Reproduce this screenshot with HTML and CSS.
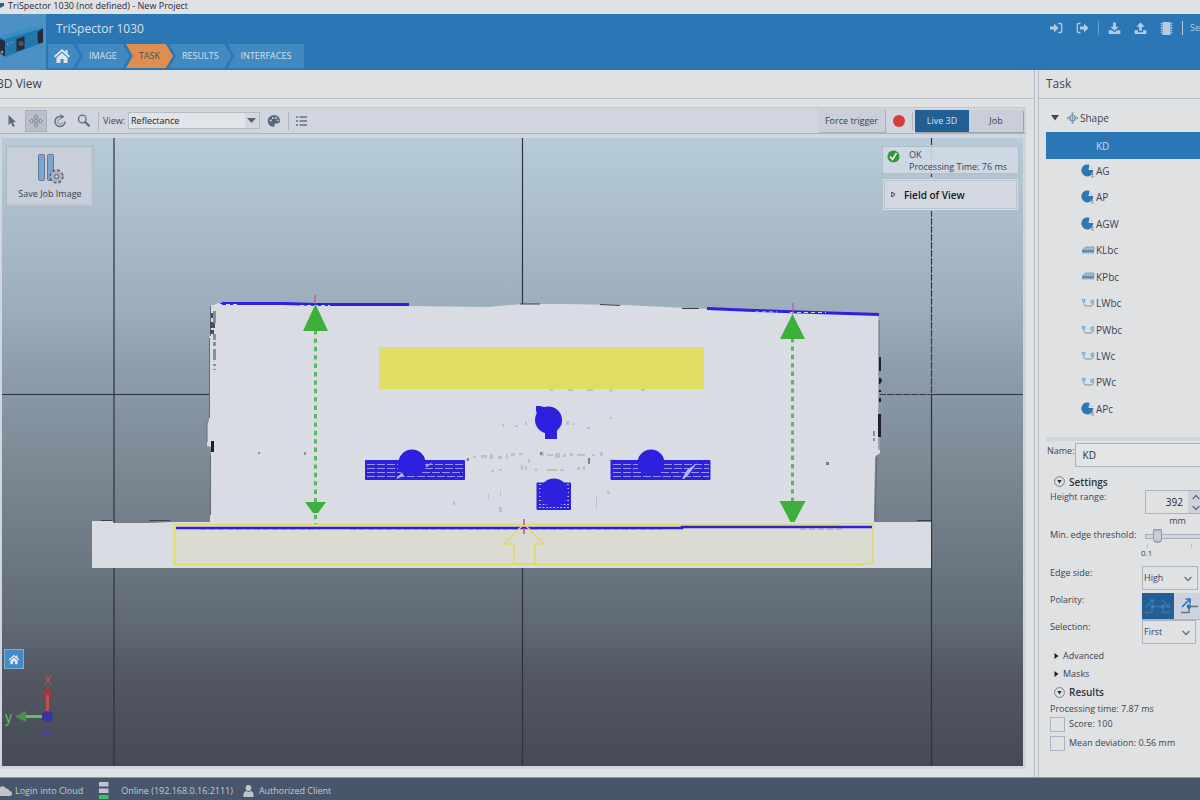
FILE: index.html
```html
<!DOCTYPE html>
<html lang="en">
<head>
<meta charset="utf-8">
<title>TriSpector 1030 (not defined) - New Project</title>
<link rel="stylesheet" href="styles.css">
</head>
<body>
<svg class="defs" width="0" height="0" aria-hidden="true">
  <defs>
    <symbol id="house" viewBox="0 0 18 16"><path d="M9 1 1 8l1.300 1.400L9 3.600l6.700 5.800L17 8l-2.500-2.200V2h-2v2z"/><path d="M9 5 3.500 9.700V15h4v-4h3v4h4V9.700z"/></symbol>
    <symbol id="pie" viewBox="0 0 14 14"><path d="M8.500.8A6 6 0 1 0 11.500 9.500L12.300 6H7.500z" fill="#2c78b6"/><path d="M9.300 2.500 9 5h3.200A5 5 0 0 0 11 3z" fill="#c3d3df"/><path d="M9.500 10.300h2.800L10.300 13H13" fill="none" stroke="#7c8895" stroke-width=".8"/></symbol>
    <symbol id="slab" viewBox="0 0 13 9"><path d="M1 4 4 1h8.500v3z" fill="#a9c0d3" stroke="#7597b2" stroke-width=".8"/><path d="M.5 4h12v3.500H.5z" fill="#8db1cf"/><path d="M.5 5.200h12" stroke="#2c78b6" stroke-width="1.200"/></symbol>
    <symbol id="edges" viewBox="0 0 14 10"><path d="M2.500 5.500Q3 8 5.500 8h5.200q1.500-.5 1.500-3.500" fill="none" stroke="#75879a" stroke-width=".9"/><path d="M.5 1.500Q2.500 0 4.500 1.500 5 4 2.800 5.500.8 4 .5 1.500zM9 3q1.500-2 3.800-1.500Q14 4 12 6 9.500 6 9 3z" fill="#79b0d5"/><path d="M2.500 2.500v1M11.200 3.200v1" stroke="#dbe8f0"/></symbol>
    <symbol id="chev" viewBox="0 0 8 6"><path d="m.7 1 3.300 3.700L7.300 1" fill="none" stroke="#5d6776" stroke-width="1.200"/></symbol>
  </defs>
</svg>

<div class="titlebar">
  <svg width="4" height="10" viewBox="0 0 4 10"><path d="M0 2h4v3L0 7z" fill="#22639a"/></svg>
  <span>TriSpector 1030 (not defined) - New Project</span>
</div>

<header class="header">
  <div class="product">
    <svg width="46" height="56" viewBox="0 14 46 56">
      <path d="M0 37.500 31 27.500 43 28 42 43 5 57 0 53z" fill="#2277ad"/>
      <path d="M0 36.500 31 26.800 43 28 4 39.500z" fill="#3790c5"/>
      <path d="M0 39 5 41v15.500L0 53z" fill="#252c3d"/>
      <path d="m16.500 39 8-2.800v12.500l-8 2.800z" fill="#292a3a"/><circle cx="21" cy="43.500" r="2.600" fill="#535166"/>
      <path d="m37.500 32 5.500-3.500v14l-5 1z" fill="#242839"/>
      <circle cx="7.500" cy="44" r=".6" fill="#9dc9e4"/><circle cx="10" cy="43" r=".6" fill="#9dc9e4"/><circle cx="12.500" cy="42.200" r=".6" fill="#9dc9e4"/>
      <circle cx="2" cy="52" r="1.500" fill="#8d858a"/>
    </svg>
  </div>
  <div class="brand">
    <h1>TriSpector 1030</h1>
    <nav class="steps">
      <a href="#home" class="step step-home" aria-label="Home"><svg width="18" height="16"><use href="#house"/></svg></a>
      <a href="#image" class="step">IMAGE</a>
      <a href="#task" class="step active">TASK</a>
      <a href="#results" class="step">RESULTS</a>
      <a href="#interfaces" class="step last">INTERFACES</a>
    </nav>
  </div>
  <div class="header-tools">
    <button aria-label="Log in"><svg width="13" height="12" viewBox="0 0 13 12"><path d="M0 4.500h4V1.500L8.500 6 4 10.500v-3H0z"/><path d="M8.500 1.500h2q1.200 0 1.200 1.200v6.600q0 1.200-1.200 1.200h-2" fill="none" stroke="#b5cce0" stroke-width="1.300"/></svg></button>
    <button aria-label="Log out"><svg width="13" height="12" viewBox="0 0 13 12"><path d="M4 4.500h4V1.500L12.500 6 8 10.500v-3H4z"/><path d="M4.500 1.500h-2Q1.300 1.500 1.300 2.700v6.600q0 1.200 1.200 1.200h2" fill="none" stroke="#b5cce0" stroke-width="1.300"/></svg></button>
    <i class="tool-line"></i>
    <button aria-label="Download"><svg width="13" height="13" viewBox="0 0 14 13"><path d="M5.500 0h3v4.500h3L7 9 2.500 4.500h3z"/><path d="M.7 8.500h3.500L7 10.500l2.800-2h3.500v3.800H.7z"/></svg></button>
    <button aria-label="Upload"><svg width="13" height="13" viewBox="0 0 14 13"><path d="M7 0 2.500 4.500h3V9h3V4.500h3z"/><path d="M.7 8.500h3.500v2h5.600v-2h3.500v3.800H.7z"/></svg></button>
    <button aria-label="Memory"><svg width="13" height="13" viewBox="0 0 13 13"><path d="M2.500 0h8v13h-8z"/><path d="M1.500 1v11M11.500 1v11" stroke="#b5cce0" stroke-width="1.500" stroke-dasharray="1.300 1"/></svg></button>
    <i class="tool-line light"></i>
    <span class="service">Service</span>
  </div>
</header>

<main class="main">
  <section class="view-panel">
    <h2 class="panel-title view-title">3D View</h2>
    <div class="workspace">
      <div class="toolbar">
        <button class="tool" aria-label="Select"><svg width="10" height="14" viewBox="0 0 10 14"><path d="M1.500 1v10l2.500-2 2 4 1.800-1-1.900-3.700 3-.3z" fill="#5a6c82"/></svg></button>
        <button class="tool pressed" aria-label="Move"><svg width="14" height="14" viewBox="0 0 14 14"><path d="M7 .7 9 3.200H7.700v3.100h3.100V5l2.500 2-2.500 2V7.700H7.700v3.100H9L7 13.300l-2-2.500h1.300V7.700H3.200V9L.7 7l2.500-2v1.300h3.100V3.200H5z" fill="#d6dbe2" stroke="#69788a" stroke-width=".8"/></svg></button>
        <button class="tool" aria-label="Rotate"><svg width="14" height="14" viewBox="0 0 14 14"><path d="M8 2.600A5 5 0 1 0 12 7.500" fill="none" stroke="#66768a" stroke-width="1.500"/><path d="M7.500 0 11.500 2.700 7.500 5.300z" fill="#66768a"/><path d="M7.500 5.300A2.400 2.400 0 1 0 9.500 7.800" fill="none" stroke="#7b8999"/></svg></button>
        <button class="tool" aria-label="Zoom"><svg width="14" height="14" viewBox="0 0 14 14"><circle cx="5.300" cy="5" r="3.800" fill="none" stroke="#5a6c82" stroke-width="1.300"/><path d="m8 7.700 4.500 4.500" stroke="#5a6c82" stroke-width="2.200"/></svg></button>
        <i class="bar-line"></i>
        <label for="view">View:</label>
        <span class="combo"><select id="view"><option>Reflectance</option></select><svg class="combo-arrow" width="9" height="5" viewBox="0 0 9 5"><path d="M0 0h9L4.500 5z" fill="#536377"/></svg></span>
        <button class="tool" aria-label="Palette"><svg width="14" height="12" viewBox="0 0 14 12"><path fill-rule="evenodd" d="M7 .3C3 .3.800 3 .800 6S3 11.700 6.500 11.700c2 0 .5-2 1.200-2.800 1-1.300 5.300.9 5.300-3.200C13 2.500 10.500.3 7 .3zM3.800 4.500a1 1 0 1 1 0 2 1 1 0 0 1 0-2zM5.800 2a1 1 0 1 1 0 2 1 1 0 0 1 0-2zM9 2a1 1 0 1 1 0 2 1 1 0 0 1 0-2zm2 2.500a.9.900 0 1 1 0 1.800.9.900 0 0 1 0-1.800z" fill="#56667b"/></svg></button>
        <i class="bar-line tight"></i>
        <button class="tool" aria-label="List"><svg width="12" height="10" viewBox="0 0 12 10"><path d="M0 1h2M0 5h2M0 9h2M3.500 1H11M3.500 5H11M3.500 9H11" stroke="#5f6f84" stroke-width="1.300"/></svg></button>
        <span class="spacer"></span>
        <button class="trigger">Force trigger</button>
        <button class="record" aria-label="Record"></button>
        <i class="bar-line tight"></i>
        <div class="mode"><button class="on">Live 3D</button><button>Job</button></div>
      </div>

      <div class="viewport">
        <svg class="scene" viewBox="2 138 1021 628" preserveAspectRatio="none" role="img" aria-label="3D reflectance scan">
          <g stroke="#2d333e" stroke-width="1.200"><path d="M114 138v628M522.500 138v628M931.500 395v371M2 394.500h877M931 394.500h92"/></g>
          <path d="M931.500 138v257M879 394.500h52" stroke="#39383f" stroke-width="1.200" stroke-dasharray="7 1"/>
          <path d="M211 305h3l4-2 190 3 80 1 35-3h40l60 1 88 4 70 3 97 3 1 8 1 130-5 4-1 65h57v46H92v-47h20l2 2h36l22-1h38l1-75-4-1v-22l2-3v-80l1-8z" fill="#dadce4"/>
          <path d="M210.500 306v30M209.500 338v80M207 422v20M210.500 455v60M877 455l-2 65M879 320v130" stroke="#646a75" stroke-width="1"/>
          <path d="M101 520.500h11M149 520.500h21M917 520.500h14M600 304.500l20 1M682 308.500h17M520 304h20M220 303.500h12" stroke="#3e424d" stroke-width="1.200"/>
          <g fill="#22202d"><path d="M211 441h3v11h-3zM879 357h2v14h-2zM879 378h2l1 3-2 3h-1zM879 390h2v2h-2zM879 398h2v4h-2zM878 414h3v23h-3z"/></g>
          <g fill="#4d4e5a"><path d="M211 313h4v5h-4zM210 322h5v6h-5zM210 330h4v4h-4z"/></g>
          <g fill="#8c8e9a"><path d="M213 311h3v12h-3zM213 334h3v6h-3zM213 342h3v4h-3zM213 349h3v11h-3zM213 364h3v2h-3zM213 369h3v1h-3zM873 431h2v5h-2zM873 438h2v3h-2zM258 452h2v2h-2zM304 452h2v3h-2z"/></g>
          <path d="M826 462h3v3h-3z" fill="#757884"/>
          <path d="M379 347h325v42H379z" fill="#e0de62"/>
          <g fill="#bdc0ca"><path d="M502 424h2v3h-2zM515 425h3v2h-3zM525 422h2v3h-2zM560 423h2v3h-2zM566 421h3v4h-3zM573 423h2v2h-2zM610 417h2v2h-2zM587 427h3v2h-3zM550 389h3v2h-3zM568 389h5v2h-5zM587 389h6v2h-6zM610 389h2v3h-2zM641 389h4v2h-4zM466 459h3v2h-3zM473 456h3v2h-3zM481 455h6v3h-6zM490 454h3v5h-3zM498 456h4v3h-4zM506 454h2v5h-2zM511 453h4v3h-4zM519 453h4v2h-4zM528 459h2v4h-2zM541 452h3v4h-3zM547 454h6v2h-6zM555 453h5v5h-5zM563 454h3v3h-3zM570 453h3v3h-3zM577 454h8v2h-8zM592 454h3v2h-3zM600 452h3v4h-3zM609 459h6v2h-6zM491 470h3v2h-3zM499 469h3v2h-3zM521 465h2v5h-2zM525 466h2v4h-2zM535 468h2v3h-2zM547 469h10v2h-10zM560 469h4v2h-4zM577 467h3v3h-3zM583 466h2v4h-2zM453 501h2v4h-2zM488 494h1v5h-1zM500 490h1v7h-1zM499 507h3v5h-3zM596 496h1v12h-1zM607 491h3v3h-3z"/></g>
          <path d="M540 452h2v3h-2zM588 458h2v6h-2zM467 458h2v3h-2z" fill="#7f828e"/>
          <g fill="#2d20df">
            <path d="M536 406h4l8 2v8h-10l-2-5z"/><circle cx="548.500" cy="420" r="13.500"/><path d="M545 430h12v9h-12z"/>
            <rect x="365" y="460" width="100" height="20" rx="1"/><circle cx="412" cy="463" r="13.500"/>
            <rect x="610.500" y="460" width="100" height="20" rx="1"/><circle cx="651" cy="463" r="13.500"/>
            <rect x="536.500" y="482.500" width="34.500" height="27.500" rx="1"/>
          </g>
          <g stroke="#9896f0" stroke-width="1" stroke-dasharray="8 2" fill="none">
            <path d="M367 464.500h31M425 464.500h38M367 468.500h31M425 468.500h38M367 472.500h34M422 472.500h41M367 476.500h96M613 464.500h25M664 464.500h45M613 468.500h25M664 468.500h45M613 472.500h28M661 472.500h48M613 476.500h96"/></g>
          <path d="M386 478.500h10l6-6 2 3-6 3zM682 479l5-9 10-7-8 11-5 5zM425 466l8-4-6 5z" fill="#b6b7ee"/>
          <circle cx="412" cy="463" r="13" fill="#2d20df"/>
          <g stroke="#b4b4f4" stroke-width="1.200" stroke-dasharray="2 1.500"><path d="M539 484.500h30M539 488.500h30M539 492.500h30M539 496.500h30M539 500.500h30M539 504.500h30M539 507.500h30"/></g>
          <circle cx="554" cy="492.500" r="14" fill="#2d20df"/>
          <path d="M222 303.500h62l32 1h93M707 308.500l48 2 60 2 64 2" fill="none" stroke="#2d20df" stroke-width="3"/>
          <path d="M226 304.500h14M300 305.500h30M755 312h22M790 312.500h36" stroke="#d4d4ea" stroke-dasharray="4 3"/>
          <path d="M175 525.500h698v38H175z" fill="#dbdbd4"/>
          <path d="M174.500 524.500h665v-1H873v40h-9v1H174.500z" fill="none" stroke="#dfda61" stroke-width="1.500"/>
          <path d="M176 528h506v-1h190" fill="none" stroke="#2d20df" stroke-width="2.500"/>
          <path d="M200 529.500h120M350 529.500h170M532 529.500h130M800 529h45" stroke="#8c88dd" stroke-dasharray="6 3"/>
          <path d="m524 524-20 20h10v20h21v-20h9z" fill="none" stroke="#dfda61" stroke-width="1.500"/>
          <path d="M524 519v18" stroke="#d743a4" stroke-width="1.500" stroke-dasharray="6 3"/>
          <path d="M315 295v9M793 303v11" stroke="#cc4a9c" stroke-width="1.200"/>
          <g stroke="#57ba62" stroke-width="3" stroke-dasharray="4.400 4"><path d="M315.500 330v194M792.500 338v166"/></g>
          <path d="m315.500 304 12.500 27h-25zM305 502h21l-8 11h-5zM792.500 314l12.500 25h-25zM779.500 501h26l-11 21h-4z" fill="#3caf3c"/>
          <path d="M47.500 693v20" stroke="#ca4b47" stroke-width="3"/><path d="m47.500 685 5.500 10H42z" fill="#983d3e"/>
          <path d="M42 716.500H25" stroke="#5fc060" stroke-width="3"/><path d="m15 716.500 11-5.500v11z" fill="#47934b"/>
          <circle cx="47.500" cy="716.500" r="5.500" fill="#3735a1"/>
          <g class="axis"><text x="44" y="684" fill="#c44f50">x</text><text x="5" y="722" fill="#61c263">y</text><text x="43" y="735" fill="#4544bd">Z</text></g>
        </svg>
        <button class="save-job">
          <svg width="30" height="32" viewBox="0 0 30 32"><g fill="#7ea4cd" stroke="#617995"><rect x="3.500" y="1.500" width="6" height="26" rx="1"/><rect x="12.500" y="1.500" width="6" height="26" rx="1"/></g><circle cx="21.500" cy="23.500" r="6" fill="#a9aebb" stroke="#5a5e6d" stroke-width="2.400" stroke-dasharray="2.700 2"/><circle cx="21.500" cy="23.500" r="5.800" fill="#a9aebb"/><circle cx="21.500" cy="23.500" r="2" fill="#c7ccd8" stroke="#5a5e6d"/></svg>
          <span>Save Job Image</span>
        </button>
        <button class="home-view" aria-label="Reset view"><svg width="12" height="11"><use href="#house"/></svg></button>
        <div class="overlays">
          <div class="status-card">
            <svg width="13" height="13" viewBox="0 0 13 13"><circle cx="6.500" cy="6.500" r="6" fill="#2e9637"/><path d="m3 6.500 2.500 3L9.500 3" fill="none" stroke="#e3efe5" stroke-width="1.700"/></svg>
            <div>OK<br>Processing Time: 76 ms</div>
          </div>
          <button class="fov"><svg width="5" height="7" viewBox="0 0 5 7"><path d="m.7 1 3.500 2.500L.7 6z" fill="none" stroke="#424855"/></svg>Field of View</button>
        </div>
      </div>
    </div>
  </section>

  <aside class="task-panel">
    <h2 class="panel-title">Task</h2>
    <ul class="tree">
      <li class="root"><svg width="8" height="6" viewBox="0 0 8 6"><path d="M0 0h8L4 5.500z" fill="#3e4a5c"/></svg><svg width="11" height="12" viewBox="0 0 12 12"><circle cx="6" cy="6" r="3" fill="none" stroke="#5e93bb" stroke-width="1.300"/><path d="M6 0v12M0 6h12M4.500 1.500 6 0l1.500 1.500M4.500 10.500 6 12l1.500-1.500M1.500 4.500 0 6l1.500 1.500M10.500 4.500 12 6l-1.500 1.500" fill="none" stroke="#6e8da6" stroke-width=".8"/></svg><span>Shape</span></li>
      <li class="selected"><i></i><span>KD</span></li>
      <li><svg width="14" height="14"><use href="#pie"/></svg><span>AG</span></li>
      <li><svg width="14" height="14"><use href="#pie"/></svg><span>AP</span></li>
      <li><svg width="14" height="14"><use href="#pie"/></svg><span>AGW</span></li>
      <li><svg width="14" height="9"><use href="#slab"/></svg><span>KLbc</span></li>
      <li><svg width="14" height="9"><use href="#slab"/></svg><span>KPbc</span></li>
      <li><svg width="14" height="10"><use href="#edges"/></svg><span>LWbc</span></li>
      <li><svg width="14" height="10"><use href="#edges"/></svg><span>PWbc</span></li>
      <li><svg width="14" height="10"><use href="#edges"/></svg><span>LWc</span></li>
      <li><svg width="14" height="10"><use href="#edges"/></svg><span>PWc</span></li>
      <li><svg width="14" height="14"><use href="#pie"/></svg><span>APc</span></li>
    </ul>
    <div class="name-row"><label for="name">Name:</label><input id="name" type="text" value="KD"></div>
    <div class="props">
      <h3><svg width="11" height="11" viewBox="0 0 11 11"><circle cx="5.500" cy="5.500" r="4.900" fill="none" stroke="#6a7384" stroke-width=".9"/><path d="M3.300 4h4.400L5.500 7.500z" fill="#272d39"/></svg>Settings</h3>
      <div class="row row-height"><label for="range">Height range:</label>
        <div class="range-box"><div class="spin"><input id="range" type="text" value="392"><div class="spin-buttons"><button aria-label="Increase"><svg class="flip" width="8" height="6"><use href="#chev"/></svg></button><button aria-label="Decrease"><svg width="8" height="6"><use href="#chev"/></svg></button></div></div><span>mm</span></div>
      </div>
      <div class="row row-edge"><label for="threshold">Min. edge threshold:</label>
        <div class="slide-box"><input id="threshold" type="range" min="0" max="100" value="5"><div class="ticks"><i></i><i></i><i></i></div><small>0.1</small></div>
      </div>
      <div class="row"><label for="side">Edge side:</label><span class="pick"><select id="side"><option>High</option></select><svg width="8" height="6"><use href="#chev"/></svg></span></div>
      <div class="row"><span class="row-label">Polarity:</span>
        <div class="polarity"><button class="on" aria-label="Both edges"><svg width="28" height="18" viewBox="0 0 28 18"><path d="M1 15.500h7V9.500h11v6h8" fill="none" stroke="#4b7294" stroke-width="1.400"/><path d="m2 10 7-7M6 3h3.500v3.500M18 3l7 7M25.500 6.500V10H22" fill="none" stroke="#337cb7" stroke-width="1.300"/><circle cx="8.500" cy="9.500" r="2" fill="#367fb9"/><circle cx="19" cy="9.500" r="2" fill="#367fb9"/></svg></button><button aria-label="Rising edge"><svg width="20" height="18" viewBox="0 0 20 18"><path d="M1 15.500h8V9.500h9" fill="none" stroke="#67717f" stroke-width="1.500"/><path d="m2 10 7.500-7.500M5.500 2h4.500v4.500" fill="none" stroke="#2c78b6" stroke-width="1.700"/><circle cx="9" cy="9.500" r="2.300" fill="#2c78b6"/></svg></button></div>
      </div>
      <div class="row"><label for="selection">Selection:</label><span class="pick narrow"><select id="selection"><option>First</option></select><svg width="8" height="6"><use href="#chev"/></svg></span></div>
      <button class="fold"><svg width="5" height="6" viewBox="0 0 5 6"><path d="M.5 0v6L4.500 3z" fill="#1d222d"/></svg>Advanced</button>
      <button class="fold"><svg width="5" height="6" viewBox="0 0 5 6"><path d="M.5 0v6L4.500 3z" fill="#1d222d"/></svg>Masks</button>
      <h3 class="results"><svg width="11" height="11" viewBox="0 0 11 11"><circle cx="5.500" cy="5.500" r="4.900" fill="none" stroke="#6a7384" stroke-width=".9"/><path d="M3.300 4h4.400L5.500 7.500z" fill="#272d39"/></svg>Results</h3>
      <p>Processing time: 7.87 ms</p>
      <label class="check"><input type="checkbox"><span>Score: 100</span></label>
      <label class="check"><input type="checkbox"><span>Mean deviation: 0.56 mm</span></label>
    </div>
  </aside>
</main>

<footer class="statusbar">
  <svg width="12" height="10" viewBox="0 0 12 10"><path d="M0 1Q4-1 6 2.500q3-.5 3.500 2.500 2.500 0 2.500 2.500T9.500 10H0z" fill="#bfc4cd"/></svg>
  <a href="#cloud">Login into Cloud</a>
  <svg class="server" width="10" height="17" viewBox="0 0 10 17"><path d="M0 0h9.500v4.500H0zM0 6.500h9.500V11H0z" fill="#c0c3d0"/><path d="M0 13h9.500v4H0z" fill="#3fbd72"/></svg>
  <span>Online (192.168.0.16:2111)</span>
  <svg class="person" width="11" height="12" viewBox="0 0 11 12"><circle cx="5.500" cy="3" r="2.900" fill="#bfc4cd"/><path d="M.5 12V9.500Q.5 6.500 3.500 6L5.500 7l2-1q3 .5 3 3.500V12z" fill="#bfc4cd"/></svg>
  <span>Authorized Client</span>
</footer>
</body>
</html>
```

FILE: styles.css
```css
* { box-sizing: border-box; }

body {
  margin: 0;
  height: 100vh;
  display: flex;
  flex-direction: column;
  overflow: hidden;
  background: #e0e1e3;
  color: #3c4354;
  font: 9px/14px "Open Sans", "Noto Sans", sans-serif;
}

button, input, select {
  font: inherit;
  color: inherit;
  margin: 0;
  padding: 0;
  border: 0;
  border-radius: 0;
  background: none;
}

a { color: inherit; text-decoration: none; }
h1, h2, h3, p, ul { margin: 0; padding: 0; font-weight: 400; }
svg { flex: none; display: block; }
.defs { position: absolute; }

.titlebar {
  flex: none;
  height: 14px;
  display: flex;
  align-items: center;
  gap: 4px;
  line-height: 12px;
  padding-bottom: 3px;
  color: #272b35;
}

/* Header */
.header {
  flex: none;
  height: 56px;
  display: flex;
  background: #2b76b5;
  color: #d7e0e8;
}
.product { width: 46px; background: #4b91c5; }
.brand {
  flex: 1;
  padding: 5px 0 0 2px;
}
.brand h1 {
  padding-left: 8px;
  font-size: 12px;
  line-height: 20px;
}
.steps { display: flex; margin-top: 5px; }
.step {
  height: 24px;
  display: flex;
  align-items: center;
  padding: 0 13px;
  margin-right: -4px;
  background: #4289c1;
  clip-path: polygon(0 0, calc(100% - 7px) 0, 100% 50%, calc(100% - 7px) 100%, 0 100%, 7px 50%);
}
.step-home {
  padding: 0 9px 0 5px;
  fill: #dee5ec;
  clip-path: polygon(0 0, calc(100% - 7px) 0, 100% 50%, calc(100% - 7px) 100%, 0 100%);
}
.step.active { background: #df8e4f; color: #3f566b; }
.step.last { clip-path: polygon(0 0, 100% 0, 100% 100%, 0 100%, 7px 50%); }

.header-tools {
  flex: none;
  width: 150px;
  height: 28px;
  display: flex;
  align-items: center;
  gap: 13px;
  overflow: hidden;
  fill: #b5cce0;
}
.header-tools button { flex: none; }
.tool-line {
  flex: none;
  width: 1px;
  height: 14px;
  margin: 0 -4px;
  background: #6ba3cd;
}
.tool-line.light { margin-right: -6px; background: #b5cce0; }
.service { flex: none; color: #b5cce0; }

/* Panels */
.main { flex: 1; min-height: 0; display: flex; }
.view-panel {
  flex: 1;
  min-width: 0;
  display: flex;
  flex-direction: column;
  border-right: 1px solid #b9bdc9;
}
.panel-title {
  flex: none;
  height: 29px;
  padding-left: 7px;
  border-bottom: 1px solid #b9bdc9;
  font-size: 12px;
  line-height: 27px;
}
.view-title { padding: 0; text-indent: -3px; }
.workspace {
  flex: 1;
  min-height: 0;
  display: flex;
  flex-direction: column;
  margin: 8px 8px 8px 0;
  background: #d1d5df;
}

.toolbar {
  flex: none;
  height: 27px;
  display: flex;
  align-items: center;
  padding-left: 1px;
  border-top: 1px solid #c2c8d1;
  border-bottom: 1px solid #acb2be;
}
.tool {
  width: 22px;
  height: 22px;
  margin-right: 2px;
  display: flex;
  align-items: center;
  justify-content: center;
}
.tool.pressed { background: #b9bec9; border: 1px solid #aab0bc; }
.bar-line { width: 1px; height: 18px; margin: 0 4px 0 1px; background: #afb5c1; }
.bar-line.tight { margin: 0 2px 0 1px; }
.combo { position: relative; margin: 0 3px 0 3px; }
.combo select {
  display: block;
  width: 132px;
  height: 17px;
  padding: 0 2px;
  border: 1px solid #b4bac6;
  background: linear-gradient(90deg, #e1e4e8 116px, #d3d8df 116px);
  color: #1e222b;
  appearance: none;
}
.combo-arrow { position: absolute; right: 4px; top: 6px; pointer-events: none; }
.spacer { flex: 1; }
.trigger {
  width: 67px;
  height: 23px;
  background: #cacfd9;
  box-shadow: 1px 1px 1px #a9afbb;
}
.record {
  width: 12px;
  height: 12px;
  margin: 0 6px 0 8px;
  border-radius: 50%;
  background: #d43d36;
}
.mode { display: flex; margin-right: 3px; box-shadow: 1px 1px 1px #9fa6b2; }
.mode button { width: 54px; height: 22px; background: #c9ced8; }
.mode .on { background: #225f94; color: #d8e1ea; }

/* 3D viewport */
.viewport {
  position: relative;
  flex: 1;
  min-height: 0;
  margin: 4px 3px 3px 2px;
  background: linear-gradient(#b8cbd9, #9caebb 27%, #8797a3 41%, #73808b 60%, #5f6974 78%, #525763 86%, #464a54);
}
.scene { width: 100%; height: 100%; }
.axis { font-size: 14px; }
.save-job {
  position: absolute;
  left: 4px;
  top: 8px;
  width: 88px;
  height: 61px;
  display: flex;
  flex-direction: column;
  align-items: center;
  gap: 2px;
  padding-top: 6px;
  border: 1px solid #aab8c6;
  background: #c8cfda;
  box-shadow: inset -1px -1px 0 1px #bcc5d0;
  color: #394356;
}
.home-view {
  position: absolute;
  left: 2px;
  bottom: 97px;
  width: 20px;
  height: 20px;
  display: flex;
  align-items: center;
  justify-content: center;
  border: 1px solid #7fadd0;
  background: #438bc2;
  fill: #e1e8ee;
}
.overlays {
  position: absolute;
  right: 4px;
  top: 8px;
  width: 137px;
  display: flex;
  flex-direction: column;
  gap: 4px;
}
.status-card {
  height: 28px;
  display: flex;
  gap: 9px;
  padding: 2px 4px;
  border: 1px solid #b0bdca;
  background: #cfd9e3e6;
  line-height: 12px;
}
.status-card svg { margin-top: 1px; }
.fov {
  height: 33px;
  display: flex;
  align-items: center;
  gap: 8px;
  padding-left: 8px;
  border: 1px solid #b0bdca;
  background: #d3d7e2;
  box-shadow: inset 0 0 0 1px #d5dde6, inset 0 0 0 2px #b8c2cf;
  color: #14171e;
  font-size: 10px;
  font-weight: 600;
}

/* Task panel */
.task-panel {
  flex: none;
  width: 162px;
  margin-left: 3px;
  overflow: hidden;
  border-left: 1px solid #b9bdc9;
  white-space: nowrap;
}
.tree {
  height: 317px;
  margin: 6px 0 0 7px;
  display: grid;
  grid-auto-rows: 1fr;
  list-style: none;
  font-size: 10px;
}
.tree li { display: flex; align-items: center; gap: 1px; padding-left: 35px; }
.tree .root { padding-left: 5px; gap: 2px; }
.tree .root svg:first-child { margin-right: 6px; }
.tree .selected { margin: 1px 0 -1px; background: #2b76b5; color: #d0dbe5; }
.tree i { width: 14px; }

.name-row {
  display: flex;
  margin: 15px 0 0 7px;
  border-top: 4px solid #d0d4dc;
}
.name-row label { width: 31px; padding: 3px 0 0 1px; }
.name-row input {
  width: 140px;
  height: 24px;
  margin: 2px 0 0 0;
  padding-left: 7px;
  border: 1px solid #abb2c0;
  background: #e3e4e6;
  color: #292f3b;
  font-size: 10px;
}

.props { padding: 6px 0 0 11px; }
.props h3 {
  display: flex;
  align-items: center;
  gap: 4px;
  height: 17px;
  padding-left: 4px;
  font-weight: 600;
  font-size: 10px;
  color: #2c3340;
}
.row {
  display: flex;
  align-items: flex-start;
  width: 180px;
  height: 27px;
}
.row > label, .row-label { flex: none; width: 92px; }
.row-height { height: 38px; }
.row-edge { height: 38px; }
.row-height > label, .row-edge > label { width: 95px; }

.range-box { width: 65px; text-align: center; }
.spin { display: flex; height: 24px; border: 1px solid #abb2c0; }
.spin input { width: 42px; padding-right: 5px; text-align: right; color: #232935; font-size: 10px; }
.spin-buttons { flex: 1; background: #ccd3dd; }
.spin-buttons button { display: flex; align-items: center; justify-content: center; width: 16px; height: 11px; }
.flip { transform: rotate(180deg); }

.slide-box { flex: none; width: 150px; }
.slide-box input { display: block; width: 150px; height: 16px; appearance: none; }
.slide-box input::-webkit-slider-runnable-track { height: 5px; border: 1px solid #a9b0bd; background: #d2d6dd; }
.slide-box input::-webkit-slider-thumb {
  appearance: none;
  width: 9px;
  height: 14px;
  margin-top: -6px;
  background: linear-gradient(#a3aab9, #c8ced8 2px, #c8ced8 10px, #9ca4b3);
  border: 1px solid #8e97a7;
  border-radius: 1px 1px 4px 4px;
}
.ticks { display: flex; gap: 43px; padding-left: 2px; height: 4px; }
.ticks i { width: 1px; background: #b9bfca; }
.slide-box small { display: block; margin-left: -4px; font-size: 8px; line-height: 10px; }

.pick { position: relative; }
.pick select { display: block; width: 56px; height: 24px; padding-left: 1px; border: 1px solid #abb2c0; appearance: none; }
.pick.narrow select { width: 54px; }
.pick svg { position: absolute; right: 6px; top: 10px; pointer-events: none; }
.polarity { display: flex; background: #ccd3dd; box-shadow: 0 1px 1px #aeb5c1; }
.polarity button { width: 32px; height: 26px; display: flex; align-items: center; justify-content: center; }
.polarity .on { background: #225f94; }

.fold { display: flex; align-items: center; gap: 4px; height: 18px; padding-left: 4px; }
.props .results { height: 18px; }
.props p { line-height: 16px; }
.check { display: flex; gap: 4px; height: 19px; line-height: 14px; }
.check input { width: 15px; height: 15px; border: 1px solid #abb2c0; appearance: none; }

/* Status bar */
.statusbar {
  flex: none;
  height: 23px;
  display: flex;
  align-items: center;
  padding-top: 3px;
  border-top: 1px solid #8d96a4;
  background: #47566a;
  color: #c5cad3;
}
.statusbar a { margin-left: 3px; }
.server { margin: 0 12px 0 16px; }
.person { margin: 0 5px 0 10px; }
```
